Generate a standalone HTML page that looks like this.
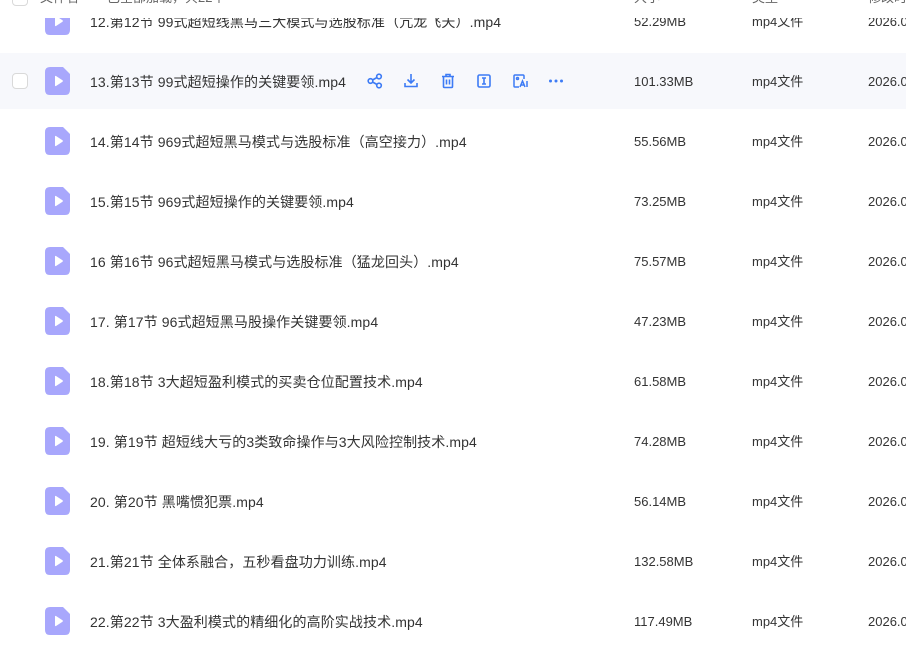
<!DOCTYPE html>
<html><head><meta charset="utf-8"><style>
*{margin:0;padding:0;box-sizing:border-box}
body{width:906px;height:660px;overflow:hidden;background:#fff;position:relative;font-family:"Liberation Sans","Noto Sans CJK SC",sans-serif;color:#333;}
.row{position:absolute;left:0;width:906px;height:56px}
.row.hl{background:#f7f8fc}
.ic{position:absolute;left:45px;top:14px;width:25px;height:28px}
.t{position:absolute;left:90px;top:1px;line-height:56px;font-size:14px;white-space:nowrap;color:#333;letter-spacing:0.1px}
.s,.ty,.d{position:absolute;top:1px;line-height:56px;font-size:13px;white-space:nowrap;color:#333}
.s{left:634px}.ty{left:752px}.d{left:868px}
.cb{position:absolute;left:12px;top:20px;width:16px;height:16px;border:1px solid #d9d9d9;border-radius:4px;background:#fff}
.hdr{position:absolute;left:0;top:0;width:906px;height:18px;background:#fff;overflow:hidden;z-index:5}
.hdr span{position:absolute;top:-13px;font-size:13px;color:#666;white-space:nowrap}
.acts{position:absolute;left:366px;top:19px;height:18px}
.acts svg{position:absolute;top:0}
</style></head><body>
<div class="hdr">
<div style="position:absolute;left:12px;top:-10px;width:16px;height:16px;border:1px solid #d9d9d9;border-radius:4px"></div>
<span style="left:40px">文件名</span><span style="left:107px">已全部加载，共22个</span>
<span style="left:634px">大小</span><span style="left:752px">类型</span><span style="left:868px">修改时间</span>
</div>
<svg width="0" height="0" style="position:absolute"><defs><symbol id="fi" viewBox="0 0 25 28"><path d="M5 0H18L25 7V23Q25 28 20 28H5Q0 28 0 23V5Q0 0 5 0Z" fill="#a8a7fc"/><path d="M10 9.5Q10 8.5 11 9L17.5 13.2Q18.3 14 17.5 14.8L11 19Q10 19.5 10 18.5Z" fill="#fff"/></symbol></defs></svg>

<div class="row" style="top:-7px"><svg class="ic"><use href="#fi"/></svg><div class="t">12.第12节 99式超短线黑马三大模式与选股标准（亢龙飞天）.mp4</div><div class="s">52.29MB</div><div class="ty">mp4文件</div><div class="d">2026.0</div></div>
<div class="row hl" style="top:53px"><div class="cb"></div><svg class="ic"><use href="#fi"/></svg><div class="t">13.第13节 99式超短操作的关键要领.mp4</div>
<div class="acts">
<svg style="left:0" width="18" height="18" viewBox="0 0 18 18" fill="none" stroke="#3d7bf5" stroke-width="1.6"><circle cx="4.5" cy="9" r="2.3"/><circle cx="13" cy="4.5" r="2.3"/><circle cx="13" cy="13.5" r="2.3"/><path d="M6.5 8L11 5.5M6.5 10L11 12.5"/></svg>
<svg style="left:36px" width="18" height="18" viewBox="0 0 18 18" fill="none" stroke="#3d7bf5" stroke-width="1.6"><path d="M9 2V11M5.5 7.5L9 11L12.5 7.5M3 11V14.5H15V11"/></svg>
<svg style="left:73px" width="18" height="18" viewBox="0 0 18 18" fill="none" stroke="#3d7bf5" stroke-width="1.6"><path d="M3 4.5H15M7 4.5V2.5H11V4.5M4.5 4.5V14.5Q4.5 15.5 5.5 15.5H12.5Q13.5 15.5 13.5 14.5V4.5M7.5 7.5V12.5M10.5 7.5V12.5"/></svg>
<svg style="left:109px" width="18" height="18" viewBox="0 0 18 18" fill="none" stroke="#3d7bf5" stroke-width="1.6"><rect x="3" y="3" width="12" height="12" rx="1.5"/><path d="M7 6H11M9 6V12M7 12H11"/></svg>
<svg style="left:145px" width="18" height="18" viewBox="0 0 18 18" fill="none" stroke="#3d7bf5" stroke-width="1.5"><path d="M8 15H4Q3 15 3 14V4Q3 3 4 3H12Q13 3 13 4V7"/><circle cx="6.5" cy="6.5" r="1"/><path d="M9 15L11.5 9L14 15M10 13H13M16 9V15"/></svg>
<svg style="left:181px" width="18" height="18" viewBox="0 0 18 18" fill="#3d7bf5"><circle cx="3.5" cy="9" r="1.5"/><circle cx="9" cy="9" r="1.5"/><circle cx="14.5" cy="9" r="1.5"/></svg>
</div>
<div class="s">101.33MB</div><div class="ty">mp4文件</div><div class="d">2026.0</div></div>
<div class="row" style="top:113px"><svg class="ic"><use href="#fi"/></svg><div class="t">14.第14节 969式超短黑马模式与选股标准（高空接力）.mp4</div><div class="s">55.56MB</div><div class="ty">mp4文件</div><div class="d">2026.0</div></div>
<div class="row" style="top:173px"><svg class="ic"><use href="#fi"/></svg><div class="t">15.第15节 969式超短操作的关键要领.mp4</div><div class="s">73.25MB</div><div class="ty">mp4文件</div><div class="d">2026.0</div></div>
<div class="row" style="top:233px"><svg class="ic"><use href="#fi"/></svg><div class="t">16 第16节 96式超短黑马模式与选股标准（猛龙回头）.mp4</div><div class="s">75.57MB</div><div class="ty">mp4文件</div><div class="d">2026.0</div></div>
<div class="row" style="top:293px"><svg class="ic"><use href="#fi"/></svg><div class="t">17. 第17节 96式超短黑马股操作关键要领.mp4</div><div class="s">47.23MB</div><div class="ty">mp4文件</div><div class="d">2026.0</div></div>
<div class="row" style="top:353px"><svg class="ic"><use href="#fi"/></svg><div class="t">18.第18节 3大超短盈利模式的买卖仓位配置技术.mp4</div><div class="s">61.58MB</div><div class="ty">mp4文件</div><div class="d">2026.0</div></div>
<div class="row" style="top:413px"><svg class="ic"><use href="#fi"/></svg><div class="t">19. 第19节 超短线大亏的3类致命操作与3大风险控制技术.mp4</div><div class="s">74.28MB</div><div class="ty">mp4文件</div><div class="d">2026.0</div></div>
<div class="row" style="top:473px"><svg class="ic"><use href="#fi"/></svg><div class="t">20. 第20节 黑嘴惯犯票.mp4</div><div class="s">56.14MB</div><div class="ty">mp4文件</div><div class="d">2026.0</div></div>
<div class="row" style="top:533px"><svg class="ic"><use href="#fi"/></svg><div class="t">21.第21节 全体系融合，五秒看盘功力训练.mp4</div><div class="s">132.58MB</div><div class="ty">mp4文件</div><div class="d">2026.0</div></div>
<div class="row" style="top:593px"><svg class="ic"><use href="#fi"/></svg><div class="t">22.第22节 3大盈利模式的精细化的高阶实战技术.mp4</div><div class="s">117.49MB</div><div class="ty">mp4文件</div><div class="d">2026.0</div></div>
</body></html>
